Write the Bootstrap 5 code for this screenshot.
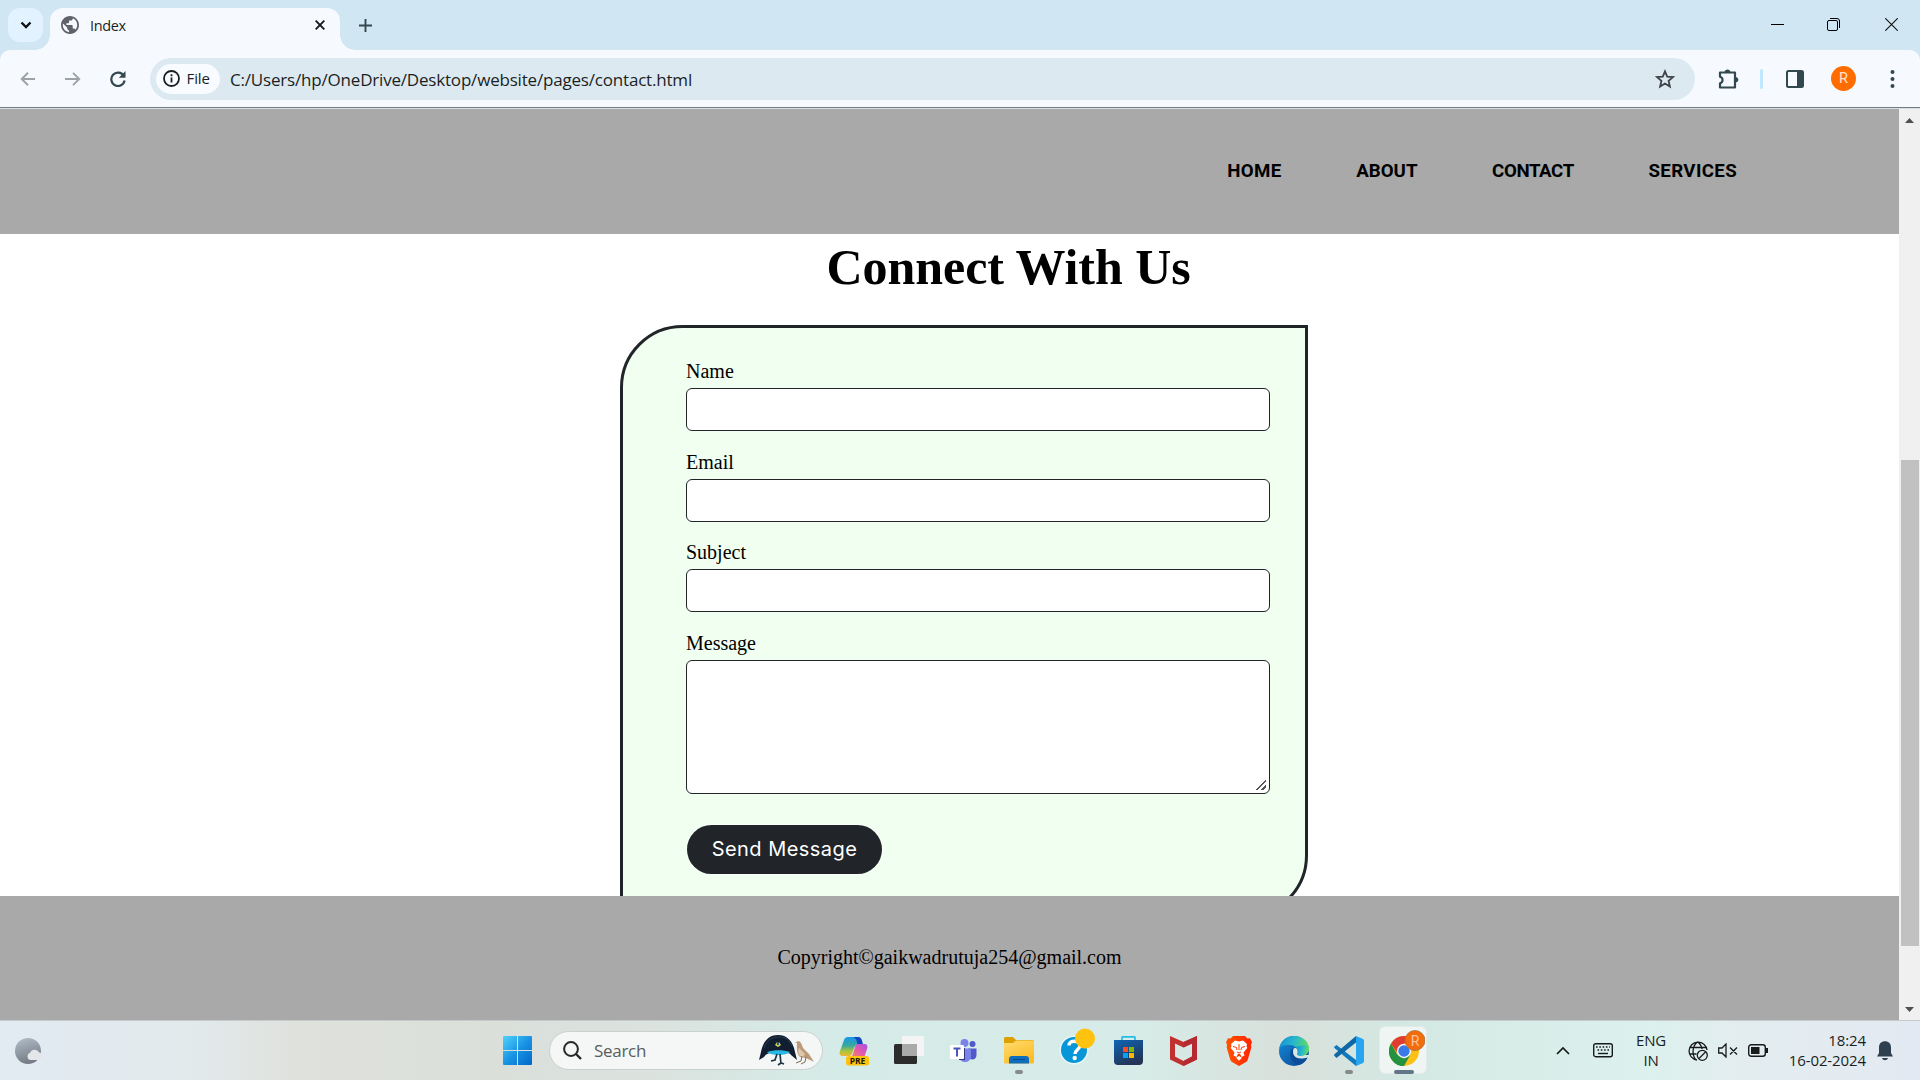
<!DOCTYPE html>
<html lang="en">
<head>
<meta charset="utf-8">
<title>Index</title>
<meta name="viewport" content="width=device-width, initial-scale=1">
<link href="https://cdn.jsdelivr.net/npm/bootstrap@5.3.0/dist/css/bootstrap.min.css" rel="stylesheet">
<style>
  body { width: 1920px; height: 1080px; overflow: hidden; font-family: "Open Sans", "Noto Sans", sans-serif; color: #1b1f22; background: #fff; }
  svg { display: block; flex: none; }
  .desk { height: 1080px; }
  /* tab strip */
  .tabstrip { height: 50px; background: #d0e6f3; padding-left: 8px; }
  .tab-search { width: 35px; height: 34px; margin-top: 8px; border-radius: 12px; background: #e2f3ff; }
  .tab-on { position: relative; width: 290px; height: 42px; margin: 8px 0 0 7px; padding: 0 15px 8px 11px; border-radius: 13px 13px 0 0; background: #f6faff; }
  .tab-on::before, .tab-on::after { content: ""; position: absolute; bottom: 0; width: 15px; height: 15px; }
  .tab-on::before { left: -15px; background: radial-gradient(circle at 0 0, transparent 14.5px, #f6faff 15px); }
  .tab-on::after { right: -15px; background: radial-gradient(circle at 100% 0, transparent 14.5px, #f6faff 15px); }
  .tab-title { font-size: 14.5px; line-height: 20px; letter-spacing: -.35px; margin-left: 11px; padding-top: 1px; }
  /* toolbar */
  .strip-under { background: #d0e6f3; }
  .toolbar { height: 57px; background: #f6faff; border-radius: 10px 10px 0 0; padding-left: 20px; }
  .omni { width: 1545px; height: 42px; border-radius: 21px; background: #dde9f1; margin-left: 25px; padding: 0 20px 0 6px; }
  .chip { width: 64px; height: 30px; border-radius: 15px; background: #f8fbff; padding-left: 7px; font-size: 15px; letter-spacing: -.1px; }
  .url { font-size: 17px; letter-spacing: -.19px; margin-left: 10px; white-space: nowrap; line-height: 24px; padding-top: 2px; }
  .split { width: 3px; height: 20px; border-radius: 2px; background: #bfe7fd; margin: 0 23px 0 20px; }
  .face { width: 25px; height: 25px; background: #ff6d00; color: #ffe6d3; font-size: 14.5px; margin-left: 27px; font-family: Roboto, sans-serif; }
  .edge { height: 2px; background: #dadfe3; border-top: 1px solid #747b81; }
  /* page */
  .view { height: 911px; }
  .site { width: 1899px; font-family: "Liberation Serif", serif; color: #000; background: #fff; overflow: hidden; }
  .site-head { height: 125px; background: #a9a9a9; padding: 0 162px 2px 0; font: bold 18.7px Roboto, sans-serif; }
  .site-head a { color: #000; text-decoration: none; white-space: nowrap; margin-left: 74.6px; }
  .site-head .snug { letter-spacing: -.4px; }
  .site-head .airy { letter-spacing: .35px; }
  .site-main { height: 662px; overflow: hidden; }
  .title-us { font-size: 50px; font-weight: bold; line-height: 56px; letter-spacing: -.05px; margin: 5px 0 0 826.5px; }
  .contact { width: 688px; height: 593px; margin: 30px 0 0 620px; padding: 32px 35px 0 63px; border: 3px solid #212529; border-radius: 62.5px 0 62.5px 0; background: #f0fff0; }
  .contact .form-label { font-size: 20px; line-height: 22px; margin: 0 0 4px; padding: 0; display: block; height: 24px; }
  .contact .form-control { border: 1px solid #212529; border-radius: 6px; background: #fff; padding: 0; height: 43px; min-height: 0; margin-bottom: 19.5px; }
  .contact textarea.form-control { height: 134px; resize: vertical; margin-bottom: 31px; }
  .contact textarea::-webkit-resizer { background: linear-gradient(135deg, transparent 46%, #555 47%, #555 58%, transparent 59%, transparent 74%, #555 75%, #555 86%, transparent 87%) 2px 2px / 10px 10px no-repeat; }
  .send { width: 195px; height: 49px; margin-left: 1px; padding: 0; background: #212529; color: #fff; font: 20px Inter, sans-serif; letter-spacing: .45px; box-shadow: 0 0 0 1px #fff8; }
  .site-foot { height: 124px; background: #a9a9a9; font-size: 20px; padding-bottom: 3px; }
  .scroller { width: 21px; background: #f0f0f0; }
  .thumb { width: 18px; height: 486px; background: #c1c1c1; }
  /* taskbar */
  .taskbar { height: 60px; border-top: 1px solid #c4cbcc; background: linear-gradient(90deg, #e2eaf3 0, #e2eaec 190px, #dfe1dc 300px, #dadfda 500px, #dbe3df 660px, #d5ebe7 830px, #d7ece8 1130px, #d8e0db 1290px, #d4e8e3 1400px, #dcf1ed 1640px, #e3edef 1740px, #e3e9f2 1920px); }
  .slot { width: 55px; height: 59px; position: relative; flex: none; }
  .slot svg { position: relative; }
  .slot.run::after { content: ""; position: absolute; bottom: 6px; left: 50%; margin-left: -4px; width: 8px; height: 4px; border-radius: 2px; background: #858b8a; }
  .slot.front::after { width: 20px; margin-left: -10px; background: #617787; }
  .slot.front::before { content: ""; position: absolute; inset: 5px 4px 6px 3px; border-radius: 6px; background: #eef5f3; border: 1px solid #e2ebe9; }
  .find { width: 274px; height: 39px; margin: 0 4px 0 4px; border-radius: 20px; background: #f4f7f6; border: 1px solid #c9d1cf; padding: 0 7px 0 13px; font-size: 17px; letter-spacing: -.3px; color: #5a5d5d; }
  .tray { font-size: 15px; line-height: 20px; letter-spacing: -.25px; }
  .tray-text { padding-bottom: 2px; }
  .clock { width: 98px; letter-spacing: -.1px; }
</style>
<script src="https://cdn.jsdelivr.net/npm/bootstrap@5.3.0/dist/js/bootstrap.bundle.min.js"></script>
</head>
<body>
<div class="desk d-flex flex-column">

  <div class="tabstrip d-flex align-items-start">
    <div class="tab-search d-flex align-items-center justify-content-center">
      <svg width="12" height="8" viewBox="0 0 12 8"><path d="M1.500 1.500 6 6l4.500-4.500" fill="none" stroke="#111" stroke-width="2.300"/></svg>
    </div>
    <div class="tab-on d-flex align-items-center">
      <svg width="18" height="18" viewBox="2 2 20 20"><path d="M12 2C6.480 2 2 6.480 2 12s4.480 10 10 10 10-4.480 10-10S17.520 2 12 2zm-1 17.930c-3.950-.49-7-3.850-7-7.930 0-.62.08-1.210.21-1.790L9 15v1c0 1.100.9 2 2 2v1.930zm6.900-2.540c-.26-.81-1-1.390-1.900-1.390h-1v-3c0-.55-.45-1-1-1H8v-2h2c.55 0 1-.45 1-1V7h2c1.100 0 2-.9 2-2v-.41c2.930 1.190 5 4.060 5 7.410 0 2.080-.8 3.970-2.100 5.390z" fill="#5f6368"/></svg>
      <span class="tab-title">Index</span>
      <svg class="ms-auto" width="10" height="10" viewBox="0 0 10 10"><path d="M.7.7l8.600 8.600M9.300.7.7 9.300" stroke="#15191c" stroke-width="1.900"/></svg>
    </div>
    <svg style="margin:19px 0 0 19px" width="13" height="13" viewBox="0 0 13 13"><path d="M6.500 0v13M0 6.500h13" stroke="#33474f" stroke-width="1.900"/></svg>
    <div class="ms-auto d-flex" style="padding:18px 22px 0 0">
      <svg width="13" height="13" viewBox="0 0 13 13"><path d="M0 6.500h13" stroke="#000"/></svg>
      <svg style="margin-left:43px" width="13" height="13" viewBox="0 0 13 13"><rect x=".5" y="2.500" width="10" height="10" rx="1.500" fill="none" stroke="#000"/><path d="M3 .5h7a2.500 2.500 0 0 1 2.500 2.500v7" fill="none" stroke="#000"/></svg>
      <svg style="margin-left:45px" width="13" height="13" viewBox="0 0 13 13"><path d="M.3.3l12.400 12.400M12.700.3.3 12.700" stroke="#111" stroke-width="1.100"/></svg>
    </div>
  </div>

  <div class="strip-under">
    <div class="toolbar d-flex align-items-center">
      <svg width="16" height="14" viewBox="0 0 16 14"><path d="M15 7H2M8 .8 1.700 7 8 13.200" fill="none" stroke="#9da2a7" stroke-width="1.900"/></svg>
      <svg style="margin-left:29px" width="16" height="14" viewBox="0 0 16 14"><path d="M0 7h13M8 .8 14.200 7 8 13.200" fill="none" stroke="#9da2a7" stroke-width="1.900"/></svg>
      <svg style="margin-left:28.500px" width="16" height="16" viewBox="0 0 16 16"><path d="M13.700 4.700A6.700 6.700 0 1 0 14.600 9.500" fill="none" stroke="#33474f" stroke-width="2.200"/><path d="M15.500 0v6.800H8.800z" fill="#33474f"/></svg>
      <div class="omni d-flex align-items-center" style="margin-left:24.500px">
        <div class="chip d-flex align-items-center">
          <svg width="17" height="17" viewBox="0 0 17 17"><circle cx="8.500" cy="8.500" r="7.500" fill="none" stroke="#1b1f22" stroke-width="1.800"/><path d="M8.500 7.500v5M8.500 4.300v1.900" stroke="#1b1f22" stroke-width="1.800"/></svg>
          <span style="margin-left:6.500px">File</span>
        </div>
        <span class="url">C:/Users/hp/OneDrive/Desktop/website/pages/contact.html</span>
        <svg class="ms-auto" width="20" height="20" viewBox="0 0 20 20"><path d="M10 2.300l2.200 5.300 5.800.5-4.400 3.800 1.300 5.600-4.900-3-4.900 3 1.300-5.600L2 8.100l5.800-.5z" fill="none" stroke="#3d4348" stroke-width="1.800"/></svg>
      </div>
      <svg style="margin-left:23px" width="22" height="22" viewBox="0 0 22 22"><path d="M2 4.500h15v15H2v-4.300c3.400-1 3.400-5.600 0-6.400z" fill="none" stroke="#33474f" stroke-width="2.200" stroke-linejoin="round"/><path d="M6.500 4.500c0-4 6-4 6 0M17 9c4.500 0 4.500 5.500 0 5.500" fill="#33474f"/></svg>
      <div class="split"></div>
      <svg width="18" height="18" viewBox="0 0 18 18"><rect x="1" y="1" width="16" height="16" rx="1.500" fill="none" stroke="#33474f" stroke-width="2"/><path d="M11 1h6v16h-6z" fill="#33474f"/></svg>
      <div class="face rounded-circle d-flex align-items-center justify-content-center">R</div>
      <svg style="margin-left:34px" width="5" height="18" viewBox="0 0 5 18"><g fill="#33474f"><circle cx="2.500" cy="2" r="2"/><circle cx="2.500" cy="9" r="2"/><circle cx="2.500" cy="16" r="2"/></g></svg>
    </div>
  </div>
  <div class="edge"></div>

  <div class="view d-flex">
    <div class="site d-flex flex-column">
      <nav class="site-head d-flex align-items-center justify-content-end">
        <a href="#" class="airy">HOME</a><a href="#">ABOUT</a><a href="#" class="snug">CONTACT</a><a href="#" class="airy">SERVICES</a>
      </nav>
      <main class="site-main">
        <h1 class="title-us">Connect With Us</h1>
        <form class="contact">
          <label class="form-label" for="n">Name</label>
          <input class="form-control" id="n">
          <label class="form-label" for="e">Email</label>
          <input class="form-control" id="e">
          <label class="form-label" for="s">Subject</label>
          <input class="form-control" id="s">
          <label class="form-label" for="m">Message</label>
          <textarea class="form-control" id="m"></textarea>
          <button type="button" class="btn rounded-pill send">Send Message</button>
        </form>
      </main>
      <footer class="site-foot d-flex align-items-center justify-content-center">Copyright©gaikwadrutuja254@gmail.com</footer>
    </div>
    <div class="scroller d-flex flex-column align-items-center">
      <svg style="margin-top:9px" width="9" height="5" viewBox="0 0 9 5"><path d="M0 5 4.500 0 9 5z" fill="#505050"/></svg>
      <div class="thumb" style="margin-top:337px"></div>
      <svg class="mt-auto" style="margin-bottom:8px" width="9" height="5" viewBox="0 0 9 5"><path d="M0 0l4.500 5L9 0z" fill="#505050"/></svg>
    </div>
  </div>

  <div class="taskbar d-flex align-items-center">
    <svg style="margin-left:15px" width="29" height="26" viewBox="0 0 29 26">
      <defs><linearGradient id="moon" x1="0" y1="0" x2=".3" y2="1"><stop stop-color="#b2bfc9"/><stop offset="1" stop-color="#777d87"/></linearGradient>
      <linearGradient id="win" x1="0" y1="0" x2="1" y2="1"><stop stop-color="#51d2fb"/><stop offset=".5" stop-color="#1a94e4"/><stop offset="1" stop-color="#0067c8"/></linearGradient></defs>
      <circle cx="13" cy="13" r="13" fill="url(#moon)"/><path d="M15 22a3.800 3.800 0 0 1 0-7.200 5.200 5.200 0 0 1 9.300-.4A4 4 0 0 1 25 22z" fill="#e4e7ea"/></svg>
    <div class="slot d-flex align-items-center justify-content-center" style="margin-left:446px">
      <svg width="29" height="29" viewBox="0 0 29 29"><path d="M1 0h13v14H0V1q0-1 1-1M15 0h13q1 0 1 1v13H15zM0 15h14v14H1q-1 0-1-1zM15 15h14v13q0 1-1 1H15z" fill="url(#win)"/></svg>
    </div>
    <div class="find d-flex align-items-center">
      <svg width="19" height="19" viewBox="0 0 19 19"><circle cx="8" cy="8" r="6.900" fill="none" stroke="#252929" stroke-width="2"/><path d="M13 13l5 5" stroke="#252929" stroke-width="2.400"/></svg>
      <span style="margin-left:12px">Search</span>
      <svg class="ms-auto" width="56" height="31" viewBox="0 0 56 31">
        <path d="M0 25 2 17C4 6 10 0 19 0s15 6 17 17l2 8-6-5c-1-2-3-2-6-2H12c-3 0-5 1-7 4z" fill="#111d31"/>
        <path d="M5 13C8 5 13 2 20 2s10 3 13 9" stroke="#26394f" fill="none"/>
        <path d="M8 17c7-2.500 16-2.500 23 0-4 4-19 4-23 0" fill="#27b9e4"/>
        <path d="M18 7l-2 3 3 2 3-2-2-3-1 2z" fill="#e9d64a"/><circle cx="19" cy="9" r="1.300" fill="#16688d"/>
        <path d="M18 19l-2 6-4 1M21 19l1 10M19 30l3-2 3 1" stroke="#1c3544" stroke-width="1.700" fill="none"/>
        <path d="M36 8l3-2c3 0 4 4 5 7l6 6 5 8-8-4-6-1c-4-4-3-10-3-14z" fill="#bd9b78"/><path d="M40 13c-2 4 0 9 4 9l2-3z" fill="#dfc9ac"/><path d="M43 21l-1 5-5 2M47 22l-1 5-4 2" stroke="#806850" fill="none"/>
      </svg>
    </div>

    <div class="slot d-flex align-items-center justify-content-center" style="margin-left:-1px">
      <svg width="30" height="30" viewBox="0 0 30 30">
        <defs><linearGradient id="cpa" x1="0" y1="0" x2="0" y2="1"><stop stop-color="#1798e8"/><stop offset=".45" stop-color="#38a8a0"/><stop offset=".75" stop-color="#a9c53b"/><stop offset="1" stop-color="#f0b52f"/></linearGradient>
        <linearGradient id="cpb" x1="1" y1="0" x2="0" y2="1"><stop stop-color="#a650e8"/><stop offset=".5" stop-color="#e55aa8"/><stop offset="1" stop-color="#ff8a50"/></linearGradient></defs>
        <path d="M9 1h10q3 0 4 4l1 4h-6q-2 0-3 3l-2 6q-1 2-3 2H4c-3 0-4-2-3-5L5 4q1-3 4-3" fill="url(#cpa)"/><path d="M14 1h5q3 0 4 4l1 4h-4q-2 0-2-3-1-4-4-5" fill="#1545c4"/>
        <path d="M19 8h6c3 0 4 2 3 5l-3 9H11q2-1 3-4l2-7q1-3 3-3" fill="url(#cpb)"/>
        <rect x="7" y="20" width="23" height="9.500" rx="2.500" fill="#fdc30a"/><text x="18.500" y="27.700" text-anchor="middle" font-family="Open Sans, sans-serif" font-weight="bold" font-size="8.500" fill="#201800">PRE</text></svg>
    </div>
    <div class="slot d-flex align-items-center justify-content-center">
      <svg width="30" height="29" viewBox="0 0 30 29"><rect y="8" width="23" height="20" rx="1.500" fill="#2c2c2c"/><rect x="8" y="0" width="22" height="20" rx="1" fill="#f4f4f4"/><path d="M8 8h15v12H8z" fill="#a9aaaa"/></svg>
    </div>
    <div class="slot d-flex align-items-center justify-content-center">
      <svg width="27" height="24" viewBox="0 0 27 24"><circle cx="22.500" cy="5" r="3" fill="#5059c9"/><path d="M18 9.500h8.500V16c0 6-8.500 6-8.500 0z" fill="#5059c9"/><circle cx="14.500" cy="4" r="4" fill="#7b83eb"/><path d="M9 9.500h12V17c0 8-12 8-12 0z" fill="#7b83eb"/><path d="M9 9h6v12H9z" fill="#363a7d"/><rect y="6" width="14" height="14" rx="1" fill="#fff"/><path d="M3.500 9.500h7M7 9.500v8" stroke="#4b53bc" stroke-width="2"/></svg>
    </div>
    <div class="slot run d-flex align-items-center justify-content-center">
      <svg width="30" height="27" viewBox="0 0 30 27"><defs><linearGradient id="fo" x1="0" y1="0" x2=".6" y2="1"><stop stop-color="#ffdc70"/><stop offset="1" stop-color="#fbbc25"/></linearGradient></defs><path d="M0 1.500Q0 0 1.500 0H9l3 3h16.500Q30 3 30 4.500V8H0z" fill="#dca000"/><path d="M0 6h9l3-2.500h18v22q0 1-1 1H1q-1 0-1-1z" fill="url(#fo)"/><path d="M5 26.500V22q0-3 3-3h14q3 0 3 3v4.500z" fill="#0f6dbd"/><path d="M9 22.500h12" stroke="#064b8b"/></svg>
    </div>
    <div class="slot d-flex align-items-center justify-content-center">
      <svg width="36" height="38" viewBox="0 0 36 38" style="top:-4px;left:3px"><circle cx="15" cy="22" r="14.500" fill="#e7f8fa"/><circle cx="15" cy="22" r="13" fill="#0796d7"/><path d="M10 17.500c0-6 11-5.500 11 0 0 4-5 4-5 8.500" stroke="#fff" stroke-width="3.400" fill="none"/><circle cx="15.700" cy="30" r="2.200" fill="#fff"/><circle cx="26" cy="10.500" r="10" fill="#ffc20e"/></svg>
    </div>
    <div class="slot d-flex align-items-center justify-content-center">
      <svg width="29" height="29" viewBox="0 0 29 29"><defs><linearGradient id="st" x1="0" y1="0" x2=".5" y2="1"><stop stop-color="#0c66b7"/><stop offset="1" stop-color="#243456"/></linearGradient></defs><path d="M8 6V1.500Q8 .8 9 .8h11q1 0 1 .7V6" fill="none" stroke="#24bce9" stroke-width="1.700"/><path d="M0 4h29v21q0 4-4 4H4q-4 0-4-4z" fill="url(#st)"/><path d="M9 11h5v5H9z" fill="#f25022"/><path d="M15 11h5v5h-5z" fill="#7fba00"/><path d="M9 17h5v5H9z" fill="#00a4ef"/><path d="M15 17h5v5h-5z" fill="#ffb900"/></svg>
    </div>
    <div class="slot d-flex align-items-center justify-content-center">
      <svg width="27" height="30" viewBox="0 0 27 30"><path d="M0 0l13.500 6L27 0v23.500L13.500 30 0 23.500zM5 7.500v13l8.500 4.500 8.500-4.500v-13l-8.500 4z" fill="#c0302f" fill-rule="evenodd"/><path d="M13.500 6 27 0v23.500L13.500 30v-5l8.500-4.500v-13l-8.500 4z" fill="#b52a31"/></svg>
    </div>
    <div class="slot d-flex align-items-center justify-content-center">
      <svg width="26" height="30" viewBox="0 0 26 30"><defs><linearGradient id="br"><stop stop-color="#ff5500"/><stop offset="1" stop-color="#ff2200"/></linearGradient></defs><path d="M7 0h12l2.500 2.500 2.500-.3 2 4-1 2.300.3 3-3.300 11.500q-.5 2-2 3L13 30l-7-4q-1.500-1-2-3L.7 11.500 1 8.500 0 6.200l2-4 2.500.3z" fill="url(#br)"/><path d="M13 5.500l4-1 4 3.500-.5 2 .8 2-3.800 4.500 1 3-3 1.500-1-2.500-1.500-1-1.500 1-1 2.500-3-1.500 1-3L4.700 12l.8-2L5 8l4-3.500z" fill="#fff"/><path d="M7 10.500l3.500 1 .5 2.500M19 10.500l-3.500 1-.5 2.500M13 8v6M11 16l2 1 2-1" stroke="#ff3a00" stroke-width="1" fill="none"/><path d="M13 20l3 1.700-3 3-3-3z" fill="#fff"/></svg>
    </div>
    <div class="slot d-flex align-items-center justify-content-center">
      <svg width="30" height="30" viewBox="0 0 30 30"><defs><linearGradient id="ea" x1="0" y1=".3" x2="1" y2=".5"><stop stop-color="#1593d8"/><stop offset=".5" stop-color="#28b9c9"/><stop offset="1" stop-color="#68df56"/></linearGradient><linearGradient id="eb" x1="0" y1="0" x2="1" y2="1"><stop stop-color="#168ddd"/><stop offset="1" stop-color="#0a438d"/></linearGradient></defs><circle cx="15" cy="15" r="15" fill="url(#eb)"/><path d="M.3 12C2 4 8 0 15 0c9 0 15 6 15 12.500 0 5-4 7.500-7.500 7.500-4 0-5.500-1.500-4-3.500 1-5-4-8-9-7.500-4 .2-7.500 1-9.200 3" fill="url(#ea)"/><path d="M14 12c-6 6-2 15 6 17 4-1 7-4 8.500-7.500-6 4-14 1-14.500-9.500" fill="#0b4c98"/><path d="M14.500 13c-2 6 2 12 14 8.500l1.500 1V19h-7c-4 1-5.500-.7-4.200-2.500.3-2-.5-4-2-4.500-1 0-2 .3-2.300 1" fill="#d9e5e1"/><path d="M17 11c7-2 13-3 13 2 0 4-4 7-8 7-4 0-4.500-2-3.400-3.500.3-2-.6-4-1.600-5.500" fill="url(#ea)"/></svg>
    </div>
    <div class="slot run d-flex align-items-center justify-content-center">
      <svg width="30" height="30" viewBox="0 0 30 30"><path d="M0 11l2.500-2L22 24v6L1 12.500q-1-1-1-1.500" fill="#1279bd"/><path d="M0 19.500 2.500 22 22 6.500V0L1 17.800q-1 1-1 1.700" fill="#0e68a8"/><path d="M22 0l7 3q1 .5 1 2v20q0 1.500-1 2l-7 3z" fill="#28a5ef"/></svg>
    </div>
    <div class="slot run front d-flex align-items-center justify-content-center">
      <svg width="36" height="38" viewBox="0 0 36 38" style="top:-3px;left:3px"><circle cx="15" cy="22" r="15" fill="#fbc116"/><path d="M2 14.500A15 15 0 0 1 28 14.500H15L9 25z" fill="#df3d31"/><path d="M2 14.500 8.500 26l6.500 4-3 7A15 15 0 0 1 2 14.500" fill="#24923e"/><path d="M8.500 25.500 15 29.500l6.500-4L15 37h-3C9 35 6 30 5 27z" fill="#24923e"/><circle cx="15" cy="22" r="7.200" fill="#f3f7f5"/><circle cx="15" cy="22" r="5.700" fill="#3979ea"/><circle cx="26" cy="11.500" r="10" fill="#f36c0b" stroke="#aa6f45" stroke-width=".8"/><text x="26" y="17" text-anchor="middle" font-family="Roboto, sans-serif" font-size="14" fill="#ffc29c">R</text></svg>
    </div>

    <div class="tray d-flex align-items-center" style="margin-left:125px">
      <svg width="14" height="9" viewBox="0 0 14 9"><path d="M1 8l6-6 6 6" fill="none" stroke="#181b1b" stroke-width="1.700"/></svg>
      <svg style="margin-left:23px" width="20" height="15" viewBox="0 0 20 15"><rect x=".7" y=".7" width="18.600" height="13" rx="2" fill="none" stroke="#181b1b" stroke-width="1.400"/><path d="M3 4h14M4.500 7h12" stroke="#181b1b" stroke-width="1.600" stroke-dasharray="1.600 1.700"/><path d="M5 10.500h10" stroke="#181b1b" stroke-width="1.400"/></svg>
      <div class="text-center tray-text" style="width:40px;margin-left:18px">ENG<br>IN</div>
      <svg style="margin-left:17px" width="20" height="20" viewBox="0 0 20 20"><g fill="none" stroke="#181b1b" stroke-width="1.300"><path d="M9 19A9 9 0 1 1 19 9M7.500 18.500c-4-5-3-14 2-17.500C12 2.500 13.500 5 14 8M1.500 6.500h16.500M1.500 13h7"/><circle cx="14.300" cy="14.300" r="5"/><path d="M11 17.500l6.500-6.500"/></g></svg>
      <svg style="margin-left:10px" width="20" height="15" viewBox="0 0 20 15"><path d="M.7 5H4l4-4v13l-4-4H.7zM12 4.500l7 7M19 4.500l-7 7" fill="none" stroke="#181b1b" stroke-width="1.300"/></svg>
      <svg style="margin-left:10px" width="20" height="13" viewBox="0 0 20 13"><rect x=".7" y=".7" width="16.600" height="11.600" rx="2.500" fill="none" stroke="#181b1b" stroke-width="1.400"/><rect x="3" y="3" width="8.500" height="7" fill="#181b1b"/><path d="M18 4h2v5h-2z" fill="#181b1b"/></svg>
      <div class="text-end clock tray-text">18:24<br>16-02-2024</div>
      <svg style="margin-left:11px" width="16" height="20" viewBox="0 0 16 20"><path d="M2 6.500C2 2.500 4.500.3 8 .3s6 2.200 6 6.200V12l2 3.500H0L2 12zM5 17h6c-.7 3-5.300 3-6 0" fill="#2f414f"/></svg>
    </div>
  </div>
</div>
</body>
</html>
